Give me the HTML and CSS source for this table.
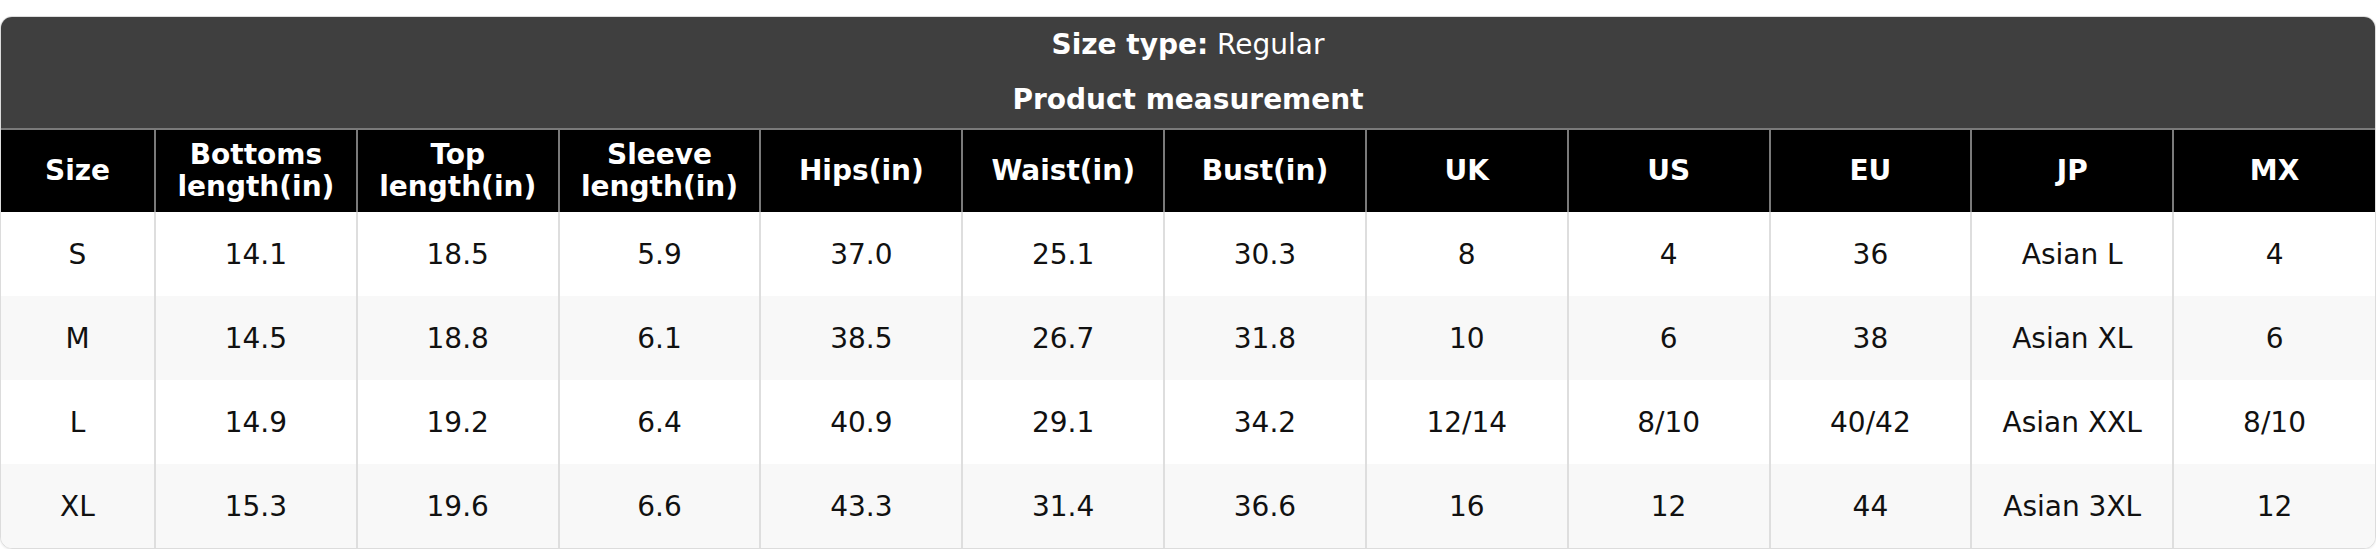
FILE: index.html
```html
<!DOCTYPE html>
<html>
<head>
<meta charset="utf-8">
<link rel="stylesheet" href="styles.css">
</head>
<body>
<div class="chart">
  <div class="chart-head">
    <div class="chart-line"><b>Size type:</b> Regular</div>
    <div class="chart-line"><b>Product measurement</b></div>
  </div>
  <table class="size-table">
    <colgroup>
      <col class="col-first">
      <col><col><col><col><col><col><col><col><col><col><col>
    </colgroup>
    <thead>
      <tr>
        <th>Size</th>
        <th>Bottoms<br>length(in)</th>
        <th>Top<br>length(in)</th>
        <th>Sleeve<br>length(in)</th>
        <th>Hips(in)</th>
        <th>Waist(in)</th>
        <th>Bust(in)</th>
        <th>UK</th>
        <th>US</th>
        <th>EU</th>
        <th>JP</th>
        <th>MX</th>
      </tr>
    </thead>
    <tbody>
      <tr><td>S</td><td>14.1</td><td>18.5</td><td>5.9</td><td>37.0</td><td>25.1</td><td>30.3</td><td>8</td><td>4</td><td>36</td><td>Asian L</td><td>4</td></tr>
      <tr><td>M</td><td>14.5</td><td>18.8</td><td>6.1</td><td>38.5</td><td>26.7</td><td>31.8</td><td>10</td><td>6</td><td>38</td><td>Asian XL</td><td>6</td></tr>
      <tr><td>L</td><td>14.9</td><td>19.2</td><td>6.4</td><td>40.9</td><td>29.1</td><td>34.2</td><td>12/14</td><td>8/10</td><td>40/42</td><td>Asian XXL</td><td>8/10</td></tr>
      <tr><td>XL</td><td>15.3</td><td>19.6</td><td>6.6</td><td>43.3</td><td>31.4</td><td>36.6</td><td>16</td><td>12</td><td>44</td><td>Asian 3XL</td><td>12</td></tr>
    </tbody>
  </table>
</div>
</body>
</html>
```
FILE: styles.css
```css
html, body {
  margin: 0;
  padding: 0;
  background: #fff;
}
body {
  padding-top: 16px;
  font-family: "DejaVu Sans", "Liberation Sans", sans-serif;
  font-size: 28px;
  color: #111;
}
.chart {
  border: 1px solid #dcdcdc;
  border-radius: 12px;
  overflow: hidden;
  background: #fff;
  box-shadow: 0 1px 2px rgba(0,0,0,0.08);
}
.chart-head {
  background: #3f3f3f;
  color: #fff;
  text-align: center;
}
.chart-line {
  height: 56px;
  line-height: 56px;
}
.chart-line:first-child {
  height: 55px;
}
.size-table {
  width: 100%;
  border-collapse: collapse;
  table-layout: fixed;
}
.col-first {
  width: 154px;
}
.size-table th {
  background: #000;
  color: #fff;
  font-weight: bold;
  height: 82px;
  padding: 0;
  line-height: 32px;
  border-left: 2px solid #7a7a7a;
  border-top: 2px solid #7a7a7a;
  vertical-align: middle;
}
.size-table td {
  height: 84px;
  padding: 0;
  text-align: center;
  vertical-align: middle;
  border-left: 2px solid #dedede;
}
.size-table th:first-child,
.size-table td:first-child {
  border-left: none;
}
.size-table tbody tr:nth-child(even) td {
  background: #f8f8f8;
}
```
